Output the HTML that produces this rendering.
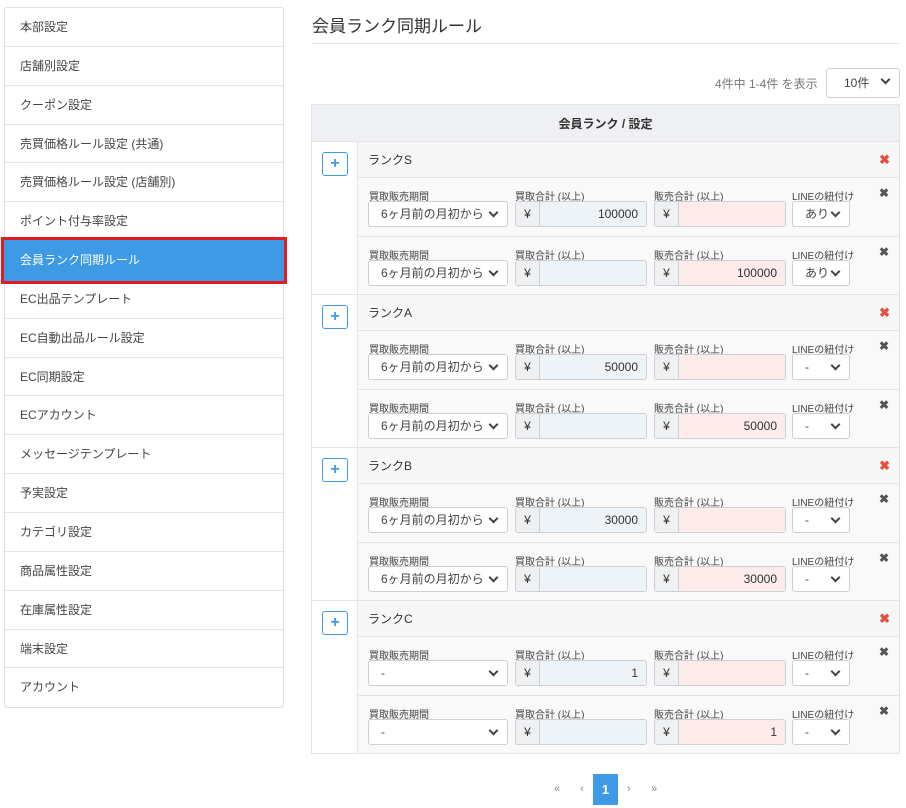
<!DOCTYPE html><html><head><meta charset="utf-8"><style>
*{box-sizing:border-box;margin:0;padding:0}
body{width:906px;height:808px;background:#fff;font-family:"Liberation Sans","Noto Sans CJK JP",sans-serif;color:#333;position:relative;overflow:hidden}
.a{position:absolute}
.side{left:4px;top:7px;width:280px;border:1px solid #dfe1e5;border-radius:3px}
.side div{height:38.85px;line-height:38px;border-bottom:1px solid #e3e5e8;padding-left:15px;font-size:12px;color:#444}
.side div:last-child{border-bottom:none}
.side .act{background:#3f9ae5;color:#fff;outline:3px solid #e31b23;outline-offset:-1px;position:relative;left:-2px;width:282px;height:42.85px;line-height:42px;margin-top:-2px;margin-bottom:-2px;padding-left:17px}
.grp{left:311px;width:589px;height:153px;border-left:1px solid #e3e5e8;border-right:1px solid #e3e5e8;border-bottom:1px solid #e3e5e8}
.lc{left:0;top:0;width:46px;height:152px;background:#fff;border-right:1px solid #e3e5e8}
.plus{left:10px;top:10px;width:26px;height:24px;border:1px solid #3f9ae5;border-radius:3px;color:#3f9ae5;font-weight:bold;font-size:16px;text-align:center;line-height:21px;background:#fff}
.gh{left:46px;top:0;width:541px;height:36px;background:#f7f7f8;border-bottom:1px solid #e3e5e8;font-size:12px;line-height:36px;padding-left:10px}
.rx{right:9px;top:0;color:#e74c3c;font-weight:bold;font-size:13px}
.row{left:46px;width:541px;height:59px;background:#f9f9fa;border-bottom:1px solid #e3e5e8}
.lb{top:10px;font-size:10px;color:#444;white-space:nowrap}
.sel{top:23px;height:26px;border:1px solid #ccd0d5;border-radius:3px;background:#fff;font-size:12px;line-height:24px;padding-left:12px;color:#444}
.sel:after{content:"";position:absolute;right:10px;top:7px;width:5px;height:5px;border-right:2px solid #444;border-bottom:2px solid #444;transform:rotate(45deg)}
.ig{top:23px;width:132px;height:26px;border:1px solid #ccd0d5;border-radius:3px;overflow:hidden;font-size:12px}
.ig .y{position:absolute;left:0;top:0;width:24px;height:24px;background:#eef0f2;border-right:1px solid #ccd0d5;text-align:center;line-height:24px}
.ig .v{position:absolute;left:24px;top:0;right:0;height:24px;line-height:24px;text-align:right;padding-right:8px}
.b .v{background:#eef3f8}.p .v{background:#fdeceb}
.dx{right:10px;top:8px;font-size:12px;color:#555;font-weight:bold}
</style></head><body>
<div class="a side">
<div>本部設定</div><div>店舗別設定</div><div>クーポン設定</div><div>売買価格ルール設定 (共通)</div><div>売買価格ルール設定 (店舗別)</div><div>ポイント付与率設定</div><div class="act">会員ランク同期ルール</div><div>EC出品テンプレート</div><div>EC自動出品ルール設定</div><div>EC同期設定</div><div>ECアカウント</div><div>メッセージテンプレート</div><div>予実設定</div><div>カテゴリ設定</div><div>商品属性設定</div><div>在庫属性設定</div><div>端末設定</div><div>アカウント</div>
</div>
<div class="a" style="left:312px;top:12px;font-size:17px;color:#333">会員ランク同期ルール</div>
<div class="a" style="left:312px;top:43px;width:588px;border-top:1px solid #e3e5e8"></div>
<div class="a" style="left:715px;top:75px;font-size:12px;color:#777">4件中 1-4件 を表示</div>
<div class="a sel" style="left:826px;top:68px;width:74px;height:30px;line-height:28px;padding-left:17px">10件</div>
<div class="a" style="left:311px;top:104px;width:589px;height:38px;background:#eff0f3;border:1px solid #e3e5e8;text-align:center;line-height:38px;font-size:12px;font-weight:bold">会員ランク / 設定</div>

<div class="a grp" style="top:142px"><div class="a lc"><div class="a plus">+</div></div><div class="a gh">ランクS<span class="a rx">✖</span></div>
<div class="a row" style="top:36px"><span class="a lb" style="left:11px">買取販売期間</span><div class="a sel" style="left:10px;width:140px">6ヶ月前の月初から</div><span class="a lb" style="left:157px">買取合計 (以上)</span><div class="a ig b" style="left:157px"><span class="y">¥</span><span class="v">100000</span></div><span class="a lb" style="left:296px">販売合計 (以上)</span><div class="a ig p" style="left:296px"><span class="y">¥</span><span class="v"></span></div><span class="a lb" style="left:434px">LINEの紐付け</span><div class="a sel" style="left:434px;width:58px">あり</div><span class="a dx">✖</span></div>
<div class="a row" style="top:95px;height:57px;border-bottom:none"><span class="a lb" style="left:11px">買取販売期間</span><div class="a sel" style="left:10px;width:140px">6ヶ月前の月初から</div><span class="a lb" style="left:157px">買取合計 (以上)</span><div class="a ig b" style="left:157px"><span class="y">¥</span><span class="v"></span></div><span class="a lb" style="left:296px">販売合計 (以上)</span><div class="a ig p" style="left:296px"><span class="y">¥</span><span class="v">100000</span></div><span class="a lb" style="left:434px">LINEの紐付け</span><div class="a sel" style="left:434px;width:58px">あり</div><span class="a dx">✖</span></div></div>

<div class="a grp" style="top:295px"><div class="a lc"><div class="a plus">+</div></div><div class="a gh">ランクA<span class="a rx">✖</span></div>
<div class="a row" style="top:36px"><span class="a lb" style="left:11px">買取販売期間</span><div class="a sel" style="left:10px;width:140px">6ヶ月前の月初から</div><span class="a lb" style="left:157px">買取合計 (以上)</span><div class="a ig b" style="left:157px"><span class="y">¥</span><span class="v">50000</span></div><span class="a lb" style="left:296px">販売合計 (以上)</span><div class="a ig p" style="left:296px"><span class="y">¥</span><span class="v"></span></div><span class="a lb" style="left:434px">LINEの紐付け</span><div class="a sel" style="left:434px;width:58px">-</div><span class="a dx">✖</span></div>
<div class="a row" style="top:95px;height:57px;border-bottom:none"><span class="a lb" style="left:11px">買取販売期間</span><div class="a sel" style="left:10px;width:140px">6ヶ月前の月初から</div><span class="a lb" style="left:157px">買取合計 (以上)</span><div class="a ig b" style="left:157px"><span class="y">¥</span><span class="v"></span></div><span class="a lb" style="left:296px">販売合計 (以上)</span><div class="a ig p" style="left:296px"><span class="y">¥</span><span class="v">50000</span></div><span class="a lb" style="left:434px">LINEの紐付け</span><div class="a sel" style="left:434px;width:58px">-</div><span class="a dx">✖</span></div></div>

<div class="a grp" style="top:448px"><div class="a lc"><div class="a plus">+</div></div><div class="a gh">ランクB<span class="a rx">✖</span></div>
<div class="a row" style="top:36px"><span class="a lb" style="left:11px">買取販売期間</span><div class="a sel" style="left:10px;width:140px">6ヶ月前の月初から</div><span class="a lb" style="left:157px">買取合計 (以上)</span><div class="a ig b" style="left:157px"><span class="y">¥</span><span class="v">30000</span></div><span class="a lb" style="left:296px">販売合計 (以上)</span><div class="a ig p" style="left:296px"><span class="y">¥</span><span class="v"></span></div><span class="a lb" style="left:434px">LINEの紐付け</span><div class="a sel" style="left:434px;width:58px">-</div><span class="a dx">✖</span></div>
<div class="a row" style="top:95px;height:57px;border-bottom:none"><span class="a lb" style="left:11px">買取販売期間</span><div class="a sel" style="left:10px;width:140px">6ヶ月前の月初から</div><span class="a lb" style="left:157px">買取合計 (以上)</span><div class="a ig b" style="left:157px"><span class="y">¥</span><span class="v"></span></div><span class="a lb" style="left:296px">販売合計 (以上)</span><div class="a ig p" style="left:296px"><span class="y">¥</span><span class="v">30000</span></div><span class="a lb" style="left:434px">LINEの紐付け</span><div class="a sel" style="left:434px;width:58px">-</div><span class="a dx">✖</span></div></div>

<div class="a grp" style="top:601px"><div class="a lc"><div class="a plus">+</div></div><div class="a gh">ランクC<span class="a rx">✖</span></div>
<div class="a row" style="top:36px"><span class="a lb" style="left:11px">買取販売期間</span><div class="a sel" style="left:10px;width:140px">-</div><span class="a lb" style="left:157px">買取合計 (以上)</span><div class="a ig b" style="left:157px"><span class="y">¥</span><span class="v">1</span></div><span class="a lb" style="left:296px">販売合計 (以上)</span><div class="a ig p" style="left:296px"><span class="y">¥</span><span class="v"></span></div><span class="a lb" style="left:434px">LINEの紐付け</span><div class="a sel" style="left:434px;width:58px">-</div><span class="a dx">✖</span></div>
<div class="a row" style="top:95px;height:57px;border-bottom:none"><span class="a lb" style="left:11px">買取販売期間</span><div class="a sel" style="left:10px;width:140px">-</div><span class="a lb" style="left:157px">買取合計 (以上)</span><div class="a ig b" style="left:157px"><span class="y">¥</span><span class="v"></span></div><span class="a lb" style="left:296px">販売合計 (以上)</span><div class="a ig p" style="left:296px"><span class="y">¥</span><span class="v">1</span></div><span class="a lb" style="left:434px">LINEの紐付け</span><div class="a sel" style="left:434px;width:58px">-</div><span class="a dx">✖</span></div></div>

<div class="a" style="left:554px;top:783px;font-size:11px;color:#888">«</div>
<div class="a" style="left:580px;top:783px;font-size:11px;color:#888">‹</div>
<div class="a" style="left:593px;top:774px;width:25px;height:31px;background:#3f9ae5;color:#fff;font-weight:bold;font-size:13px;text-align:center;line-height:31px">1</div>
<div class="a" style="left:627px;top:783px;font-size:11px;color:#888">›</div>
<div class="a" style="left:651px;top:783px;font-size:11px;color:#888">»</div>
</body></html>
